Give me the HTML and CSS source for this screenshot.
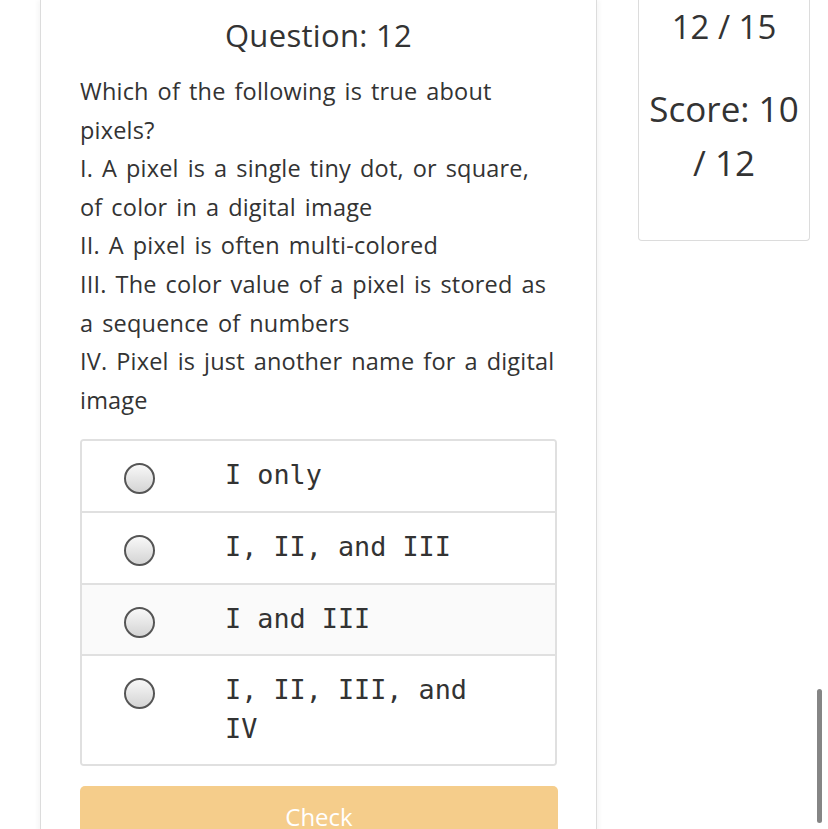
FILE: index.html
```html
<!DOCTYPE html>
<html>
<head>
<meta charset="utf-8">
<link rel="stylesheet" href="styles.css">
</head>
<body>
<div class="page">
  <main class="card">
    <h2 class="title">Question: 12</h2>
    <div class="question">Which of the following is true about pixels?<br>I. A pixel is a single tiny dot, or square, of color in a digital image<br>II. A pixel is often multi-colored<br>III. The color value of a pixel is stored as a sequence of numbers<br>IV. Pixel is just another name for a digital image</div>
    <div class="options">
      <label class="option"><span class="radio"></span><span class="opt-text">I only</span></label>
      <label class="option"><span class="radio"></span><span class="opt-text">I, II, and III</span></label>
      <label class="option hover"><span class="radio"></span><span class="opt-text">I and III</span></label>
      <label class="option"><span class="radio"></span><span class="opt-text">I, II, III, and IV</span></label>
    </div>
    <button class="check">Check</button>
  </main>
  <aside class="status">
    <div class="progress">12 / 15</div>
    <div class="score">Score: 10 / 12</div>
  </aside>
</div>
<div class="scrollbar"></div>
</body>
</html>
```
FILE: styles.css
```css
html, body {
  margin: 0;
  padding: 0;
  background: #fff;
  overflow: hidden;
  height: 829px;
}
body {
  font-family: "Open Sans", Lato, sans-serif;
  color: #333;
}
.page {
  display: flex;
  align-items: flex-start;
  padding-left: 40px;
}
.card {
  width: 477px;
  padding: 0 39px 0 39px;
  border-left: 1px solid #dcdcdc;
  border-right: 1px solid #dcdcdc;
  box-shadow: -3px 0 4px rgba(0,0,0,0.03), 3px 0 4px rgba(0,0,0,0.03);
  min-height: 900px;
  background: #fff;
}
.title {
  margin: 0;
  padding-top: 11px;
  font-weight: 400;
  font-size: 31px;
  letter-spacing: 0.3px;
  line-height: 48px;
  text-align: center;
}
.question {
  margin-top: 13px;
  font-size: 23.5px;
  letter-spacing: 0.2px;
  word-spacing: 2.6px;
  line-height: 38.6px;
}
.options {
  margin-top: 20px;
  border: 2px solid #e0e0e0;
  border-radius: 4px;
  overflow: hidden;
}
.option {
  display: grid;
  grid-template-columns: 143px 280px;
  align-items: start;
  padding: 15px 0 16px 0;
  border-top: 2px solid #e0e0e0;
  background: #fff;
}
.option:first-child {
  border-top: none;
}
.option.hover {
  background: #fafafa;
}
.radio {
  justify-self: start;
  margin-left: 42px;
  margin-top: 7px;
  width: 27px;
  height: 27px;
  border: 2px solid #555;
  border-radius: 50%;
  background: linear-gradient(#f8f8f8, #d4d4d4);
}
.opt-text {
  font-family: "DejaVu Sans Mono", monospace;
  font-size: 26.8px;
  line-height: 38.6px;
  color: #333;
}
.check {
  display: block;
  width: 478px;
  margin-top: 20px;
  height: 62px;
  border: none;
  border-radius: 5px;
  background: #f5cd8b;
  color: #fff;
  font-family: "Open Sans", sans-serif;
  font-size: 24px;
  line-height: 34px;
  padding: 14px 0 14px 0;
  vertical-align: top;
}
.status {
  margin-left: 41px;
  width: 160px;
  padding: 0 5px 50px 5px;
  border: 1px solid #dcdcdc;
  border-top: none;
  border-radius: 0 0 4px 4px;
  text-align: center;
  line-height: 54px;
}
.progress {
  font-size: 33px;
  margin-bottom: 28px;
}
.score {
  font-size: 35px;
}
.scrollbar {
  position: absolute;
  left: 817px;
  top: 689px;
  width: 5px;
  height: 134px;
  border-radius: 3px;
  background: #858585;
}
```
